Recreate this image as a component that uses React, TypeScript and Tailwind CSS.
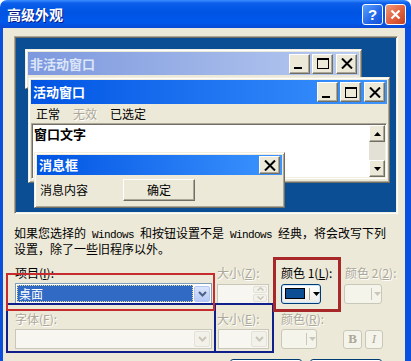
import React from "react";

function CapBtn({ kind }: { kind: "min" | "max" | "close" }) {
  return (
    <div className="flex h-[20px] w-[21px] items-center justify-center border border-t-white border-l-white border-r-[#716f64] border-b-[#716f64] bg-[#ece9d8] shadow-[inset_-1px_-1px_0_#aca899]">
      {kind === "min" && <div className="mr-[4px] mt-[9px] h-[2px] w-[8px] bg-black" />}
      {kind === "max" && <div className="h-[11px] w-[12px] border border-t-2 border-black" />}
      {kind === "close" && (
        <svg width="12" height="11" viewBox="0 0 12 11">
          <path d="M1 0.5 L11 10.5 M11 0.5 L1 10.5" stroke="black" strokeWidth="2" />
        </svg>
      )}
    </div>
  );
}

function ComboArrow({ disabled }: { disabled?: boolean }) {
  return (
    <div
      className={
        disabled
          ? "flex h-[16px] w-[16px] items-center justify-center rounded-[2px] border border-[#e4e2d8] bg-[#f2f1ea]"
          : "flex h-[16px] w-[16px] items-center justify-center rounded-[2px] border border-[#b3c6f2] bg-[linear-gradient(to_bottom,#dbe5fc,#b6c9f6)]"
      }
    >
      <svg width="9" height="6" viewBox="0 0 9 6">
        <path d="M1 1 L4.5 4.5 L8 1" fill="none" stroke={disabled ? "#c9c7ba" : "#4d6185"} strokeWidth="2" />
      </svg>
    </div>
  );
}

function DownTri({ color }: { color: string }) {
  return (
    <svg width="7" height="4" viewBox="0 0 7 4">
      <polygon points="0,0 7,0 3.5,4" fill={color} />
    </svg>
  );
}

function Label({ children, off }: { children: React.ReactNode; off?: boolean }) {
  return (
    <span
      className={
        off
          ? "whitespace-nowrap text-[#aca899] [text-shadow:1px_1px_0_#fff]"
          : "whitespace-nowrap text-black"
      }
    >
      {children}
    </span>
  );
}

export default function App() {
  return (
    <div className="relative h-[361px] w-[411px] overflow-hidden bg-white font-['Noto_Sans_CJK_SC',sans-serif] text-[12px] leading-[14px] text-black">
      {/* title bar */}
      <div className="flex h-[28px] items-center rounded-t-[7px] bg-[linear-gradient(to_bottom,#3a8cff_0%,#0a5eea_12%,#0054e3_45%,#0058ec_80%,#0a49d4_100%)] pl-[7px] pr-[5px]">
        <span className="text-[14px] font-bold leading-[16px] text-white [text-shadow:1px_1px_0_#0a1883]">
          高级外观
        </span>
        <div className="ml-auto flex gap-[2px]">
          <div className="flex h-[21px] w-[21px] items-center justify-center rounded-[3px] border border-white bg-[linear-gradient(135deg,#5da2ff,#2266e8_60%,#1650d8)] font-['Liberation_Sans',sans-serif] text-[15px] font-bold leading-none text-white">
            ?
          </div>
          <div className="flex h-[21px] w-[21px] items-center justify-center rounded-[3px] border border-white bg-[linear-gradient(135deg,#f09a7a,#e0603d_55%,#c4401e)]">
            <svg width="11" height="11" viewBox="0 0 11 11">
              <path d="M1.5 1.5 L9.5 9.5 M9.5 1.5 L1.5 9.5" stroke="white" strokeWidth="2.2" />
            </svg>
          </div>
        </div>
      </div>

      <div className="flex h-[333px]">
        <div className="w-[3px] shrink-0 bg-[#0a50de]" />
        <div className="flex-1 overflow-hidden bg-[#ece9d8] pl-[11px] pt-[8px]">
          {/* preview */}
          <div className="relative h-[178px] w-[384px] border border-t-[#aca899] border-l-[#aca899] border-r-white border-b-white bg-[#0b4e94] shadow-[inset_1px_1px_0_#716f64,inset_-1px_-1px_0_#f1efe2]">
            {/* inactive window */}
            <div className="absolute left-[10px] top-[12px] h-[40px] w-[337px] border border-t-[#f1efe2] border-l-[#f1efe2] border-r-[#716f64] border-b-[#716f64] bg-[#ece9d8] p-[2px] shadow-[inset_1px_1px_0_#fff,inset_-1px_-1px_0_#aca899]">
              <div className="flex h-[23px] items-center bg-[linear-gradient(to_right,#7d98de,#b8cbf0)] pl-[2px] pr-[2px]">
                <span className="text-[13px] font-bold text-[#dbe5f8]">非活动窗口</span>
                <div className="ml-auto flex gap-[2px]">
                  <CapBtn kind="min" />
                  <CapBtn kind="max" />
                  <div className="ml-[1px]">
                    <CapBtn kind="close" />
                  </div>
                </div>
              </div>
            </div>

            {/* active window */}
            <div className="absolute left-[13px] top-[40px] flex h-[106px] w-[362px] flex-col border border-t-[#f1efe2] border-l-[#f1efe2] border-r-[#716f64] border-b-[#716f64] bg-[#ece9d8] p-[2px] shadow-[inset_1px_1px_0_#fff,inset_-1px_-1px_0_#aca899]">
              <div className="flex h-[24px] shrink-0 items-center bg-[linear-gradient(to_right,#0054e3,#3d95ff)] pl-[2px] pr-[2px]">
                <span className="text-[13px] font-bold text-white">活动窗口</span>
                <div className="ml-auto flex gap-[2px]">
                  <CapBtn kind="min" />
                  <CapBtn kind="max" />
                  <div className="ml-[1px]">
                    <CapBtn kind="close" />
                  </div>
                </div>
              </div>
              <div className="flex h-[19px] shrink-0 items-center pl-[5px]">
                <span>正常</span>
                <span className="ml-[13px] text-[#aca899] [text-shadow:1px_1px_0_#fff]">无效</span>
                <span className="ml-[13px]">已选定</span>
              </div>
              <div className="flex h-[56px] shrink-0 border border-t-[#aca899] border-l-[#aca899] border-r-white border-b-white bg-white p-[1px] shadow-[inset_1px_1px_0_#716f64,inset_-1px_-1px_0_#f1efe2]">
                <div className="flex-1 pl-[1px] pt-[2px] text-[13px] font-bold">窗口文字</div>
                <div className="flex w-[16px] flex-col">
                  <div className="flex h-[17px] shrink-0 items-center justify-center border border-t-white border-l-white border-r-[#716f64] border-b-[#716f64] bg-[#ece9d8] shadow-[inset_-1px_-1px_0_#aca899]">
                    <svg width="7" height="4" viewBox="0 0 7 4">
                      <polygon points="0,4 7,4 3.5,0" fill="black" />
                    </svg>
                  </div>
                  <div className="flex-1 bg-[#e3e0d6]" />
                  <div className="flex h-[17px] shrink-0 items-center justify-center border border-t-white border-l-white border-r-[#716f64] border-b-[#716f64] bg-[#ece9d8] shadow-[inset_-1px_-1px_0_#aca899]">
                    <DownTri color="black" />
                  </div>
                </div>
              </div>
            </div>

            {/* message box */}
            <div className="absolute left-[19px] top-[115px] flex h-[56px] w-[251px] flex-col border border-t-[#f1efe2] border-l-[#f1efe2] border-r-[#716f64] border-b-[#716f64] bg-[#ece9d8] p-[2px] shadow-[inset_1px_1px_0_#fff,inset_-1px_-1px_0_#aca899]">
              <div className="flex h-[20px] shrink-0 items-center bg-[linear-gradient(to_right,#0054e3,#3d95ff)] pl-[2px] pr-[2px]">
                <span className="text-[13px] font-bold text-white">消息框</span>
                <div className="ml-auto flex h-[18px] w-[21px] items-center justify-center border border-t-white border-l-white border-r-[#716f64] border-b-[#716f64] bg-[#ece9d8] shadow-[inset_-1px_-1px_0_#aca899]">
                  <svg width="12" height="11" viewBox="0 0 12 11">
                    <path d="M1 0.5 L11 10.5 M11 0.5 L1 10.5" stroke="black" strokeWidth="2" />
                  </svg>
                </div>
              </div>
              <div className="flex flex-1 items-center pl-[3px]">
                <span>消息内容</span>
                <div className="ml-[35px] flex h-[22px] w-[72px] items-center justify-center border border-t-white border-l-white border-r-[#716f64] border-b-[#716f64] shadow-[inset_-1px_-1px_0_#aca899]">
                  确定
                </div>
              </div>
            </div>
          </div>

          {/* description */}
          <p className="mt-[12px] whitespace-nowrap">
            如果您选择的<span className="font-['Liberation_Mono',monospace] text-[11px] tracking-[-0.6px]"> Windows </span>和按钮设置不是<span className="font-['Liberation_Mono',monospace] text-[11px] tracking-[-0.6px]"> Windows </span>经典，将会改写下列
            <br />
            设置，除了一些旧程序以外。
          </p>

          {/* row labels 1 */}
          <div className="ml-[1px] mt-[10px] flex h-[14px]">
            <div className="w-[202px]">
              <Label>项目(<u>I</u>):</Label>
            </div>
            <div className="w-[64px]">
              <Label off>大小(<u>Z</u>):</Label>
            </div>
            <div className="w-[64px]">
              <Label>颜色 1(<u>L</u>):</Label>
            </div>
            <div>
              <Label off>颜色 2(<u>2</u>):</Label>
            </div>
          </div>

          {/* row fields 1 */}
          <div className="ml-[1px] mt-[3px] flex h-[21px] items-center">
            <div className="w-[202px]">
              <div className="flex h-[21px] w-[197px] items-center border border-[#7f9db9] bg-white p-[1px]">
                <div className="flex h-full flex-1 items-center bg-[#316ac5] pl-[2px] text-white outline outline-1 -outline-offset-1 outline-dotted outline-[#e8d890]">
                  桌面
                </div>
                <div className="ml-[1px]">
                  <ComboArrow />
                </div>
              </div>
            </div>
            <div className="w-[64px]">
              <div className="flex h-[20px] w-[52px] border border-[#c9c7ba] bg-[#f7f6f0] p-[1px]">
                <div className="flex-1" />
                <div className="flex w-[14px] flex-col gap-[1px]">
                  <div className="flex flex-1 items-center justify-center rounded-[2px] border border-[#e4e2d8] bg-[#f2f1ea]">
                    <svg width="7" height="4" viewBox="0 0 7 4">
                      <path d="M0.5 3.5 L3.5 0.8 L6.5 3.5" fill="none" stroke="#c9c7ba" strokeWidth="1.5" />
                    </svg>
                  </div>
                  <div className="flex flex-1 items-center justify-center rounded-[2px] border border-[#e4e2d8] bg-[#f2f1ea]">
                    <svg width="7" height="4" viewBox="0 0 7 4">
                      <path d="M0.5 0.5 L3.5 3.2 L6.5 0.5" fill="none" stroke="#c9c7ba" strokeWidth="1.5" />
                    </svg>
                  </div>
                </div>
              </div>
            </div>
            <div className="w-[63px]">
              <div className="flex h-[20px] w-[40px] items-center rounded-[3px] border border-[#003c74] bg-[linear-gradient(to_bottom,#ffffff,#ecebe6)] shadow-[inset_0_0_0_1px_#cee7ff]">
                <div className="ml-[3px] h-[11px] w-[21px] border border-black bg-[#0b4e94]" />
                <div className="ml-[4px] h-[12px] w-[1px] bg-[#aca899]" />
                <div className="ml-[3px]">
                  <DownTri color="black" />
                </div>
              </div>
            </div>
            <div>
              <div className="flex h-[20px] w-[38px] items-center rounded-[3px] border border-[#c9c7ba] bg-[#f5f4ea]">
                <div className="ml-[26px] h-[12px] w-[1px] bg-[#c9c7ba]" />
                <div className="ml-[2px]">
                  <DownTri color="#c9c7ba" />
                </div>
              </div>
            </div>
          </div>

          {/* row labels 2 */}
          <div className="ml-[1px] mt-[8px] flex h-[14px]">
            <div className="w-[202px]">
              <Label off>字体(<u>F</u>):</Label>
            </div>
            <div className="w-[64px]">
              <Label off>大小(<u>E</u>):</Label>
            </div>
            <div>
              <Label off>颜色(<u>R</u>):</Label>
            </div>
          </div>

          {/* row fields 2 */}
          <div className="ml-[1px] mt-[3px] flex h-[20px] items-center">
            <div className="w-[203px]">
              <div className="flex h-[20px] w-[197px] items-center justify-end border border-[#c9c7ba] bg-[#f7f6f0] p-[1px]">
                <ComboArrow disabled />
              </div>
            </div>
            <div className="w-[63px]">
              <div className="flex h-[20px] w-[51px] items-center justify-end border border-[#c9c7ba] bg-[#f7f6f0] p-[1px]">
                <ComboArrow disabled />
              </div>
            </div>
            <div className="w-[62px]">
              <div className="flex h-[20px] w-[36px] items-center rounded-[3px] border border-[#c9c7ba] bg-[#f5f4ea]">
                <div className="ml-[24px] h-[12px] w-[1px] bg-[#c9c7ba]" />
                <div className="ml-[2px]">
                  <DownTri color="#c9c7ba" />
                </div>
              </div>
            </div>
            <div className="flex gap-[3px]">
              <div className="flex h-[19px] w-[19px] items-center justify-center rounded-[3px] border border-[#c9c7ba] bg-[#f5f4ea] font-['Liberation_Serif',serif] text-[13px] font-bold text-[#aca899]">
                B
              </div>
              <div className="flex h-[19px] w-[18px] items-center justify-center rounded-[3px] border border-[#c9c7ba] bg-[#f5f4ea] font-['Liberation_Serif',serif] text-[13px] italic text-[#aca899]">
                I
              </div>
            </div>
          </div>

          {/* ok / cancel */}
          <div className="ml-[216px] mt-[10px] flex gap-[8px]">
            <div className="h-[23px] w-[72px] rounded-[3px] border border-[#003c74] bg-[linear-gradient(to_bottom,#ffffff,#ecebe6)]" />
            <div className="h-[23px] w-[72px] rounded-[3px] border border-[#003c74] bg-[linear-gradient(to_bottom,#ffffff,#ecebe6)]" />
          </div>
        </div>
        <div className="w-[6px] shrink-0 bg-[#0a50de]" />
      </div>

      {/* annotation boxes */}
      <div className="pointer-events-none absolute left-[6px] top-[303px] h-[50px] w-[268px] border-2 border-[#10208a]" />
      <div className="pointer-events-none absolute left-[214px] top-[303px] h-[50px] w-[2px] bg-[#10208a]" />
      <div className="pointer-events-none absolute left-[6px] top-[273px] h-[38px] w-[209px] border-2 border-[#c62b2e]" />
      <div className="pointer-events-none absolute left-[273px] top-[257px] h-[55px] w-[68px] border-[3px] border-[#a8282a]" />
    </div>
  );
}
